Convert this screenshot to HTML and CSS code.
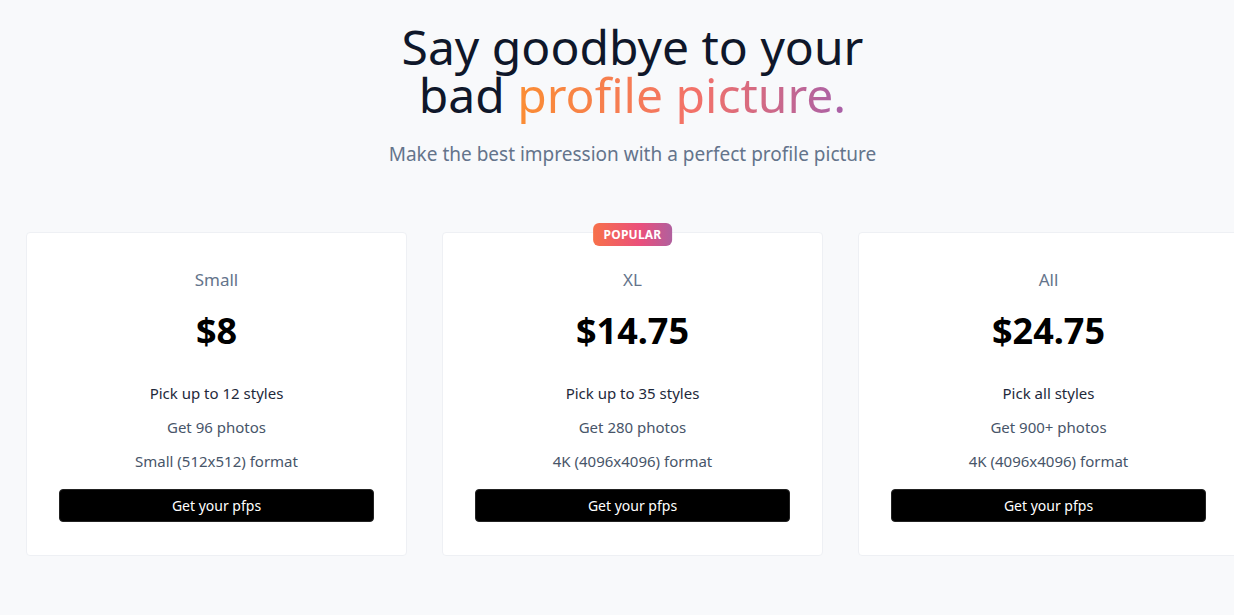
FILE: index.html
```html
<!DOCTYPE html>
<html lang="en">
<head>
<meta charset="utf-8">
<title>Pricing</title>
<link rel="stylesheet" href="styles.css">
</head>
<body>
<main class="page">
  <header class="hero">
    <h1 class="title">Say goodbye to your<br>bad <span class="grad">profile picture.</span></h1>
    <p class="subtitle">Make the best impression with a perfect profile picture</p>
  </header>
  <section class="plans">
    <div class="card">
      <div class="plan-name">Small</div>
      <div class="price">$8</div>
      <ul class="features">
        <li class="main">Pick up to 12 styles</li>
        <li>Get 96 photos</li>
        <li>Small (512x512) format</li>
      </ul>
      <button class="btn">Get your pfps</button>
    </div>
    <div class="card">
      <span class="badge">POPULAR</span>
      <div class="plan-name">XL</div>
      <div class="price">$14.75</div>
      <ul class="features">
        <li class="main">Pick up to 35 styles</li>
        <li>Get 280 photos</li>
        <li>4K (4096x4096) format</li>
      </ul>
      <button class="btn">Get your pfps</button>
    </div>
    <div class="card">
      <div class="plan-name">All</div>
      <div class="price">$24.75</div>
      <ul class="features">
        <li class="main">Pick all styles</li>
        <li>Get 900+ photos</li>
        <li>4K (4096x4096) format</li>
      </ul>
      <button class="btn">Get your pfps</button>
    </div>
  </section>
</main>
</body>
</html>
```

FILE: styles.css
```css
* { box-sizing: border-box; }
html, body {
  margin: 0;
  padding: 0;
  background: #f8f9fb;
  overflow: hidden;
}
body {
  font-family: "Noto Sans", "Noto Sans CJK KR", sans-serif;
  color: #0f172a;
}
.page {
  width: 1265px;
  padding: 23px 26px 0;
}
.hero {
  text-align: center;
}
.title {
  margin: 0;
  font-size: 48px;
  line-height: 48px;
  font-weight: 400;
  color: #0f172a;
}
.grad {
  background: linear-gradient(90deg, #fb8d33 0%, #f2716a 55%, #a860a8 100%);
  -webkit-background-clip: text;
  background-clip: text;
  color: transparent;
}
.subtitle {
  margin: 21px 0 0;
  font-size: 19px;
  line-height: 28px;
  color: #64748b;
}
.plans {
  display: grid;
  grid-template-columns: repeat(3, 381px);
  gap: 35px;
  margin-top: 64px;
}
.card {
  position: relative;
  background: #fff;
  border: 1px solid #eef0f4;
  border-radius: 4px;
  padding: 33px 32px 33px;
  display: flex;
  flex-direction: column;
  align-items: center;
  text-align: center;
}
.badge {
  position: absolute;
  top: -10px;
  left: 50%;
  transform: translateX(-50%);
  padding: 0 11px;
  height: 23px;
  line-height: 23px;
  border-radius: 6px;
  background: linear-gradient(90deg, #f7704a 0%, #ea4f7c 60%, #b0609e 100%);
  color: #fff;
  font-size: 12px;
  font-weight: 700;
  letter-spacing: 0.2px;
}
.plan-name {
  font-size: 17px;
  line-height: 28px;
  color: #64748b;
}
.price {
  margin-top: 17px;
  font-size: 36px;
  line-height: 40px;
  font-weight: 700;
  color: #000;
}
.features {
  list-style: none;
  margin: 30px 0 0;
  padding: 0;
  display: flex;
  flex-direction: column;
  gap: 10px;
}
.features li {
  font-size: 15px;
  line-height: 24px;
  color: #475569;
}
.features li.main {
  color: #1e293b;
}
.btn {
  margin-top: 16px;
  width: 100%;
  height: 33px;
  border: 1px solid #222;
  border-radius: 4px;
  background: #000;
  color: #fff;
  font-family: inherit;
  font-size: 14px;
}
```
